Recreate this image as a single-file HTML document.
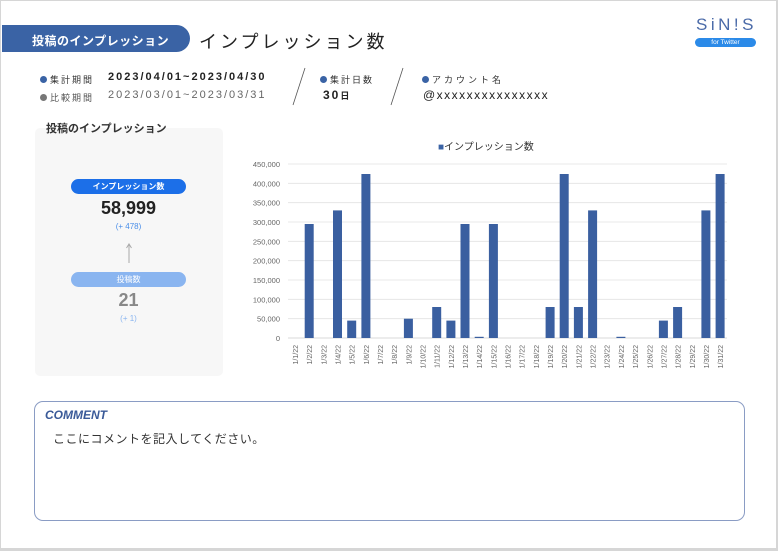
<!DOCTYPE html>
<html><head><meta charset="utf-8"><style>
body{margin:0;width:778px;height:551px;background:#fff;font-family:"Liberation Sans","Noto Sans CJK JP",sans-serif;position:relative;overflow:hidden}
.a{position:absolute;white-space:nowrap}
.d{display:inline-block;width:7px;height:7px;border-radius:50%;background:#3a63a5;margin-right:3px;vertical-align:0}
</style></head><body>
<div class="a" style="left:0;top:0;width:775px;height:547px;border:1px solid #d6d6d6;border-width:1px 2px 3px 1px"></div>
<div class="a" style="left:2px;top:25px;width:188px;height:27px;background:#3a63a5;border-radius:0 14px 14px 0"></div>
<div class="a" style="left:32px;top:32px;color:#fff;font-size:12px;font-weight:bold;letter-spacing:0.5px">投稿のインプレッション</div>
<div class="a" style="left:199px;top:28px;color:#222;font-size:18px;letter-spacing:3px">インプレッション数</div>
<div class="a" style="left:696px;top:15px;color:#4a6aa8;font-size:17px;letter-spacing:3.5px">SiN!S</div>
<div class="a" style="left:695px;top:38px;width:61px;height:9px;background:#2b8ae8;border-radius:5px;color:#fff;font-size:6.5px;text-align:center;line-height:9px">for Twitter</div>

<div class="a" style="left:40px;top:73px;font-size:9px;color:#333;letter-spacing:2px"><span class="d"></span>集計期間</div>
<div class="a" style="left:108px;top:71px;font-size:11px;font-weight:bold;color:#222;letter-spacing:2px">2023/04/01~2023/04/30</div>
<div class="a" style="left:40px;top:91px;font-size:9px;color:#555;letter-spacing:2px"><span class="d" style="background:#777"></span>比較期間</div>
<div class="a" style="left:108px;top:89px;font-size:11px;color:#666;letter-spacing:2px">2023/03/01~2023/03/31</div>
<svg class="a" style="left:0;top:0" width="778" height="120"><line x1="305" y1="68" x2="293" y2="105" stroke="#555" stroke-width="0.8"/><line x1="403" y1="68" x2="391" y2="105" stroke="#555" stroke-width="0.8"/></svg>
<div class="a" style="left:320px;top:73px;font-size:9px;color:#333;letter-spacing:2px"><span class="d"></span>集計日数</div>
<div class="a" style="left:323px;top:88px;font-size:12px;font-weight:bold;color:#222;letter-spacing:2px">30<span style="font-size:9px">日</span></div>
<div class="a" style="left:422px;top:73px;font-size:9px;color:#333;letter-spacing:3px"><span class="d"></span>アカウント名</div>
<div class="a" style="left:423px;top:88px;font-size:12px;color:#222;letter-spacing:1.5px">@xxxxxxxxxxxxxxx</div>

<div class="a" style="left:35px;top:128px;width:188px;height:248px;background:#f7f7f7;border-radius:5px"></div>
<div class="a" style="left:46px;top:120px;font-size:11px;font-weight:bold;color:#333">投稿のインプレッション</div>
<div class="a" style="left:71px;top:179px;width:115px;height:15px;background:#1c6fe8;border-radius:8px;color:#fff;font-size:8px;font-weight:bold;text-align:center;line-height:15px">インプレッション数</div>
<div class="a" style="left:71px;top:198px;width:115px;text-align:center;font-size:18px;font-weight:bold;color:#222">58,999</div>
<div class="a" style="left:71px;top:222px;width:115px;text-align:center;font-size:8px;color:#4a8ee8">(+ 478)</div>
<svg class="a" style="left:124px;top:242px" width="10" height="22"><line x1="5" y1="2" x2="5" y2="21" stroke="#aaa"/><path d="M2.5 6 L5 2 L7.5 6" fill="none" stroke="#aaa"/></svg>
<div class="a" style="left:71px;top:272px;width:115px;height:15px;background:#8ab5f0;border-radius:8px;color:#fff;font-size:8px;text-align:center;line-height:15px">投稿数</div>
<div class="a" style="left:71px;top:290px;width:115px;text-align:center;font-size:18px;font-weight:bold;color:#888">21</div>
<div class="a" style="left:71px;top:314px;width:115px;text-align:center;font-size:8px;color:#8ab5f0">(+ 1)</div>

<div class="a" style="left:438px;top:138px;font-size:10px;color:#333"><span style="color:#3a63a5">■</span>インプレッション数</div>
<svg class="a" style="left:0;top:0" width="778" height="380" font-family="Liberation Sans, sans-serif" font-size="7.5" fill="#666">
<g stroke="#e2e2e2" stroke-width="0.8">
<line x1="288" x2="727" y1="164" y2="164"/><line x1="288" x2="727" y1="183.3" y2="183.3"/><line x1="288" x2="727" y1="202.7" y2="202.7"/><line x1="288" x2="727" y1="222" y2="222"/><line x1="288" x2="727" y1="241.3" y2="241.3"/><line x1="288" x2="727" y1="260.7" y2="260.7"/><line x1="288" x2="727" y1="280" y2="280"/><line x1="288" x2="727" y1="299.3" y2="299.3"/><line x1="288" x2="727" y1="318.7" y2="318.7"/><line x1="288" x2="727" y1="338" y2="338" stroke="#ccc"/>
</g>
<g text-anchor="end">
<text x="280" y="167">450,000</text><text x="280" y="186.3">400,000</text><text x="280" y="205.7">350,000</text><text x="280" y="225">300,000</text><text x="280" y="244.3">250,000</text><text x="280" y="263.7">200,000</text><text x="280" y="283">150,000</text><text x="280" y="302.3">100,000</text><text x="280" y="321.7">50,000</text><text x="280" y="341">0</text>
</g>
<g fill="#3a5fa0">
<rect x="304.7" y="224" width="9" height="114"/>
<rect x="333" y="210.4" width="9" height="127.6"/>
<rect x="347.2" y="320.6" width="9" height="17.4"/>
<rect x="361.4" y="174" width="9" height="164"/>
<rect x="403.9" y="318.7" width="9" height="19.3"/>
<rect x="432.2" y="307" width="9" height="31"/>
<rect x="446.4" y="320.6" width="9" height="17.4"/>
<rect x="460.5" y="224" width="9" height="114"/>
<rect x="474.7" y="336.8" width="9" height="1.2"/>
<rect x="488.9" y="224" width="9" height="114"/>
<rect x="545.6" y="307" width="9" height="31"/>
<rect x="559.7" y="174" width="9" height="164"/>
<rect x="573.9" y="307" width="9" height="31"/>
<rect x="588.1" y="210.4" width="9" height="127.6"/>
<rect x="616.4" y="336.8" width="9" height="1.2"/>
<rect x="658.9" y="320.6" width="9" height="17.4"/>
<rect x="673.1" y="307" width="9" height="31"/>
<rect x="701.4" y="210.4" width="9" height="127.6"/>
<rect x="715.6" y="174" width="9" height="164"/>
</g>
<g text-anchor="end" font-size="7">
<text transform="translate(298,345) rotate(-90)">1/1/22</text>
<text transform="translate(312.2,345) rotate(-90)">1/2/22</text>
<text transform="translate(326.3,345) rotate(-90)">1/3/22</text>
<text transform="translate(340.5,345) rotate(-90)">1/4/22</text>
<text transform="translate(354.7,345) rotate(-90)">1/5/22</text>
<text transform="translate(368.9,345) rotate(-90)">1/6/22</text>
<text transform="translate(383,345) rotate(-90)">1/7/22</text>
<text transform="translate(397.2,345) rotate(-90)">1/8/22</text>
<text transform="translate(411.4,345) rotate(-90)">1/9/22</text>
<text transform="translate(425.5,345) rotate(-90)">1/10/22</text>
<text transform="translate(439.7,345) rotate(-90)">1/11/22</text>
<text transform="translate(453.9,345) rotate(-90)">1/12/22</text>
<text transform="translate(468,345) rotate(-90)">1/13/22</text>
<text transform="translate(482.2,345) rotate(-90)">1/14/22</text>
<text transform="translate(496.4,345) rotate(-90)">1/15/22</text>
<text transform="translate(510.6,345) rotate(-90)">1/16/22</text>
<text transform="translate(524.7,345) rotate(-90)">1/17/22</text>
<text transform="translate(538.9,345) rotate(-90)">1/18/22</text>
<text transform="translate(553.1,345) rotate(-90)">1/19/22</text>
<text transform="translate(567.2,345) rotate(-90)">1/20/22</text>
<text transform="translate(581.4,345) rotate(-90)">1/21/22</text>
<text transform="translate(595.6,345) rotate(-90)">1/22/22</text>
<text transform="translate(609.7,345) rotate(-90)">1/23/22</text>
<text transform="translate(623.9,345) rotate(-90)">1/24/22</text>
<text transform="translate(638.1,345) rotate(-90)">1/25/22</text>
<text transform="translate(652.3,345) rotate(-90)">1/26/22</text>
<text transform="translate(666.4,345) rotate(-90)">1/27/22</text>
<text transform="translate(680.6,345) rotate(-90)">1/28/22</text>
<text transform="translate(694.8,345) rotate(-90)">1/29/22</text>
<text transform="translate(708.9,345) rotate(-90)">1/30/22</text>
<text transform="translate(723.1,345) rotate(-90)">1/31/22</text>
</g>
</svg>

<div class="a" style="left:34px;top:401px;width:709px;height:118px;border:1px solid #8a9cc4;border-radius:9px"></div>
<div class="a" style="left:45px;top:408px;font-size:12px;font-weight:bold;font-style:italic;color:#3a5a98">COMMENT</div>
<div class="a" style="left:53px;top:430px;font-size:12px;color:#333;letter-spacing:0.5px">ここにコメントを記入してください。</div>
</body></html>
